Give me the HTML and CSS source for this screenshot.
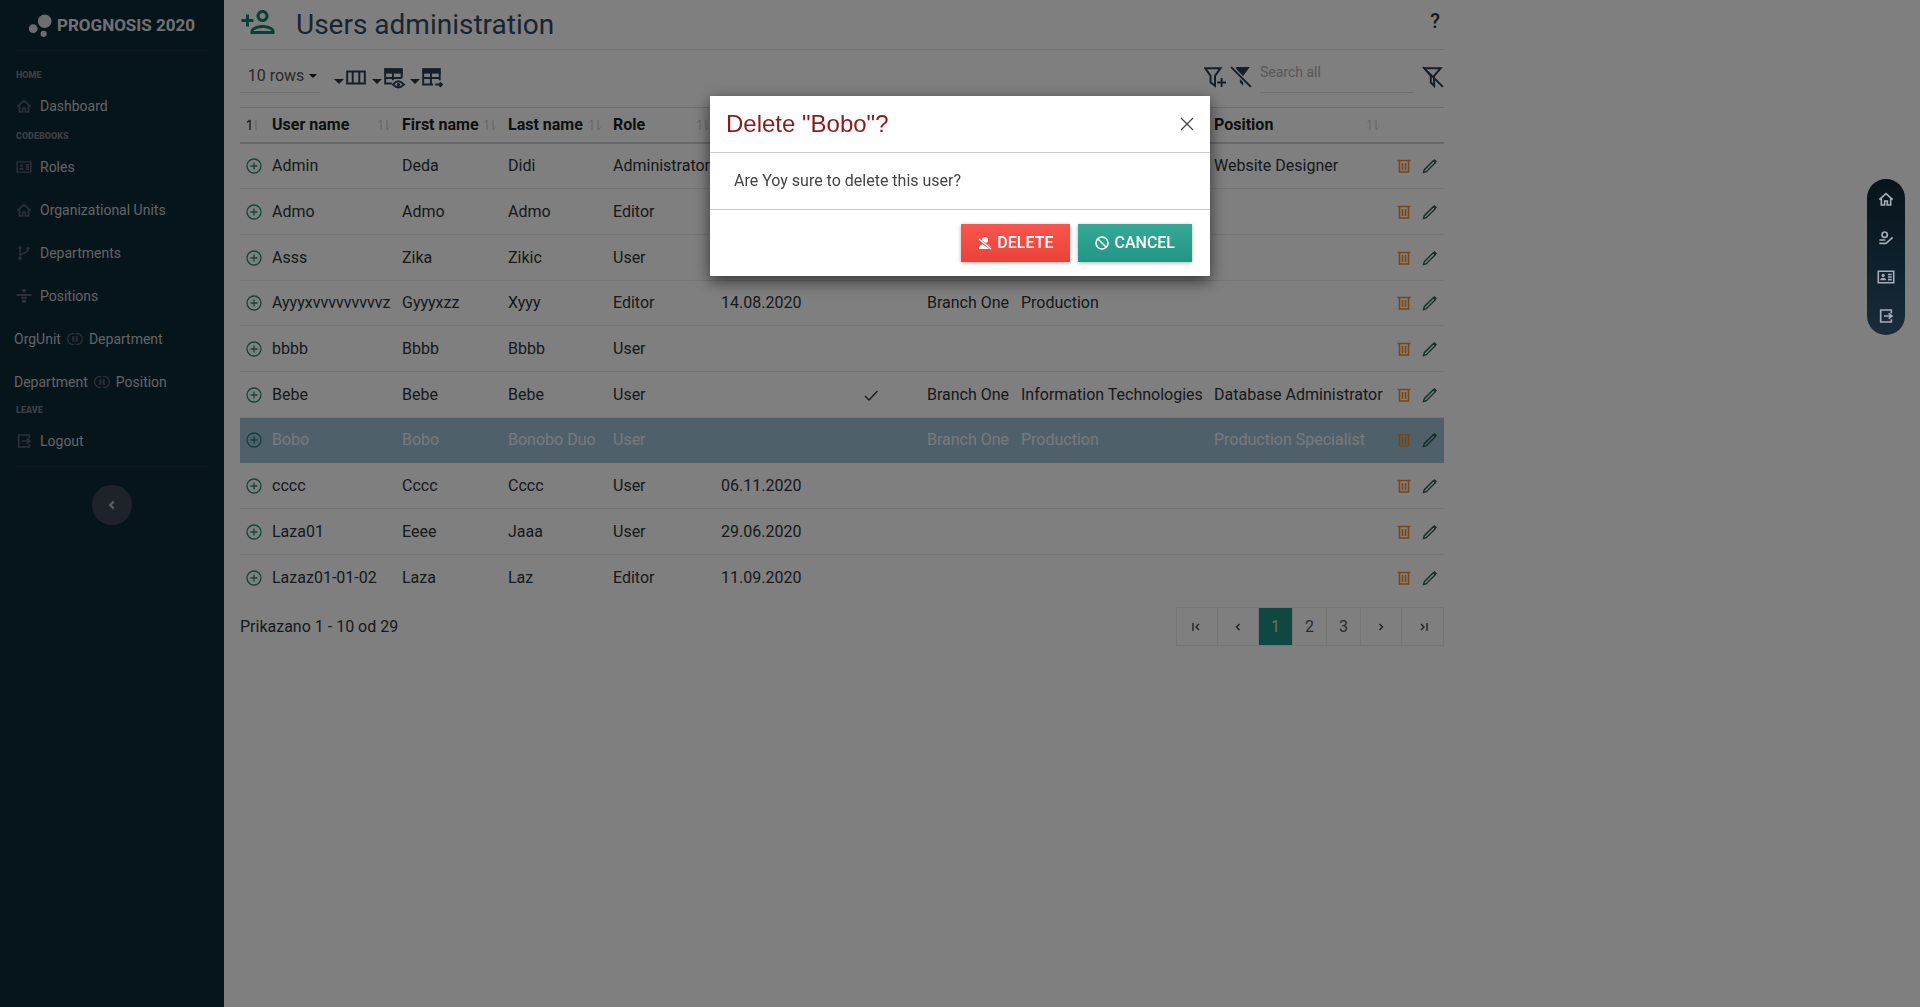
FILE: index.html
```html
<!DOCTYPE html>
<html lang="en">
<head>
<meta charset="utf-8">
<title>Users administration</title>
<link rel="stylesheet" href="styles.css">
</head>
<body>
<svg class="sprite" aria-hidden="true">
  <symbol id="home" viewBox="0 0 24 24"><path d="M2 13 12 4l10 9M5 11v10h5v-6h4v6h5V11" fill="none" stroke="currentColor" stroke-width="2.500"/></symbol>
  <symbol id="card" viewBox="0 0 28 24"><path d="M2 3h24v18H2zM17 8h6M17 12h6M17 16h6" fill="none" stroke="currentColor" stroke-width="2.500"/><circle cx="9.500" cy="9.500" r="2.500" fill="currentColor"/><path d="M5 17c0-5 9-5 9 0z" fill="currentColor"/></symbol>
  <symbol id="branch" viewBox="0 0 24 24"><path d="M6 6v12M18 7c0 6-12 4-12 10" fill="none" stroke="currentColor" stroke-width="2"/><circle cx="6" cy="4" r="2.500" fill="currentColor"/><circle cx="18" cy="5" r="2.500" fill="currentColor"/><circle cx="6" cy="20" r="2.500" fill="currentColor"/></symbol>
  <symbol id="person" viewBox="0 0 24 24"><circle cx="12" cy="4" r="3" fill="currentColor"/><path d="M1 9h22v3H1zM7 13h10l-2 4H9zM9 18h6v4H9z" fill="currentColor"/></symbol>
  <symbol id="link" viewBox="0 0 24 24"><path d="M11 4H8a7 8 0 0 0 0 16h3M13 4h3a7 8 0 0 1 0 16h-3" fill="none" stroke="currentColor" stroke-width="2"/><path d="M8 8h3v8H8zM13 8h3v8h-3z" fill="currentColor"/></symbol>
  <symbol id="exit" viewBox="0 0 24 24"><path d="M20 8V3H4v18h16v-4M9 12h11M16 8l5 4-5 4" fill="none" stroke="currentColor" stroke-width="2.500"/></symbol>
  <symbol id="useredit" viewBox="0 0 24 24"><circle cx="10" cy="7" r="4" fill="none" stroke="currentColor" stroke-width="2.500"/><path d="M2 15h9M2 20h10l10-9" fill="none" stroke="currentColor" stroke-width="2.500"/></symbol>
  <symbol id="plus" viewBox="0 0 16 16"><circle cx="8" cy="8" r="7" fill="none" stroke="currentColor" stroke-width="1.300"/><path d="M8 4.500v7M4.500 8h7" stroke="currentColor" stroke-width="1.300"/></symbol>
  <symbol id="trash" viewBox="0 0 16 16"><path d="M1.500 2.500h13M3.500 3v11h9V3M6.500 5v7M9.500 5v7" fill="none" stroke="currentColor" stroke-width="1.600"/></symbol>
  <symbol id="pencil" viewBox="0 0 16 16"><path d="M1.500 14.500l.8-2.800 9-9 2 2-9 9z" fill="none" stroke="currentColor" stroke-width="1.300"/><path d="M11.500 2l1-1 2.500 2.500-1 1z" fill="currentColor"/></symbol>
  <symbol id="check" viewBox="0 0 16 16"><path d="M2 9l4 4 8.500-9" fill="none" stroke="currentColor" stroke-width="1.300"/></symbol>
  <symbol id="sort" viewBox="0 0 14 14"><path d="M4 12V2M1.500 4.500 4 2M10 2v10M12.500 9.500 10 12" fill="none" stroke="currentColor" stroke-width="1"/></symbol>
  <symbol id="up" viewBox="0 0 14 14"><path d="M5 12V2M2 4.500 5 2" fill="none" stroke="currentColor" stroke-width="1.500"/><path d="M11 2v10" stroke="currentColor" stroke-width="1" opacity=".3"/></symbol>
</svg>

<div class="layout">
  <nav class="sidebar">
    <a class="brand" href="#">
      <svg viewBox="0 0 22 22"><circle cx="15" cy="7" r="6.500"/><circle cx="4" cy="14" r="4.200"/><circle cx="14" cy="19" r="3"/></svg>
      <span>PROGNOSIS 2020</span>
    </a>
    <hr>
    <h2>HOME</h2>
    <ul class="home-links">
      <li><a href="#"><svg><use href="#home"/></svg>Dashboard</a></li>
    </ul>
    <h2>CODEBOOKS</h2>
    <ul>
      <li><a href="#"><svg><use href="#card"/></svg>Roles</a></li>
      <li><a href="#"><svg><use href="#home"/></svg>Organizational Units</a></li>
      <li><a href="#"><svg><use href="#branch"/></svg>Departments</a></li>
      <li><a href="#"><svg><use href="#person"/></svg>Positions</a></li>
      <li><a class="pair" href="#">OrgUnit<svg><use href="#link"/></svg>Department</a></li>
      <li><a class="pair" href="#">Department<svg><use href="#link"/></svg>Position</a></li>
    </ul>
    <h2>LEAVE</h2>
    <ul>
      <li><a href="#"><svg><use href="#exit"/></svg>Logout</a></li>
    </ul>
    <hr>
    <button class="collapse" aria-label="Collapse menu"><svg viewBox="0 0 12 12"><path d="M7.500 3 4.500 6l3 3"/></svg></button>
  </nav>

  <main class="content">
    <header class="page-head">
      <svg class="adduser" viewBox="0 0 24 24"><path d="M15 12c2.210 0 4-1.790 4-4s-1.790-4-4-4-4 1.790-4 4 1.790 4 4 4zm0-6c1.100 0 2 .9 2 2s-.9 2-2 2-2-.9-2-2 .9-2 2-2zm0 8c-2.670 0-8 1.340-8 4v2h16v-2c0-2.660-5.330-4-8-4zm-6 4c.22-.72 3.310-2 6-2 2.700 0 5.800 1.290 6 2H9zm-3-3v-3h3v-2H6V7H4v3H1v2h3v3z"/></svg>
      <h1>Users administration</h1>
      <button class="help">?</button>
    </header>

    <div class="toolbar">
      <button class="rows">10 rows <span class="caret"></span></button>
      <div class="tools">
        <button aria-label="Columns"><span class="caret"></span><svg viewBox="0 0 20 20"><path class="line" d="M2 4h16v11H2zM7 4v11M13 4v11"/></svg></button>
        <button aria-label="Visibility"><span class="caret"></span><svg viewBox="0 0 20 20"><path d="M1 1h17v5H1z"/><path class="line" d="M2 5v10h6M2 10h15M9 5v7M17 5v5"/><path class="line" d="M9 16q5-6 10 0-5 5-10 0z"/><circle cx="14" cy="16" r="1.500"/></svg></button>
        <button aria-label="Export"><span class="caret"></span><svg viewBox="0 0 20 20"><path d="M1 1h17v5H1z"/><path class="line" d="M2 5v11h9M2 10h15M9 5v11M17 5v7M13 16h6M17 14l2 2-2 2"/></svg></button>
      </div>
      <div class="filters">
        <button aria-label="Add filter"><svg viewBox="0 0 20 20"><path class="line" d="M1 2h14l-5 7v9l-4-3V9zM12 15h8M16 11v8"/></svg></button>
        <button aria-label="Remove filter"><svg viewBox="0 0 20 20"><path d="M5 1h13l-6 8v9l-3-3V9z"/><path d="M1 1l18 18" stroke="#fff" stroke-width="4"/><path class="line" d="M1 1l18 18"/></svg></button>
        <input type="search" placeholder="Search all" aria-label="Search all">
        <button aria-label="Clear search"><svg viewBox="0 0 20 20"><path class="line" d="M2 2h15l-6 7v9l-3-3V9zM1 1l18 18"/></svg></button>
      </div>
    </div>

    <table>
      <colgroup><col class="c-open"><col class="c-user"><col class="c-first"><col class="c-last"><col class="c-role"><col class="c-date"><col class="c-flag"><col class="c-unit"><col class="c-dept"><col class="c-pos"><col class="c-act"></colgroup>
      <thead>
        <tr>
          <th class="arrow"><svg><use href="#up"/></svg></th>
          <th>User name<svg><use href="#sort"/></svg></th><th>First name<svg><use href="#sort"/></svg></th><th>Last name<svg><use href="#sort"/></svg></th><th>Role<svg><use href="#sort"/></svg></th>
          <th></th><th></th><th></th><th></th><th>Position<svg class="wide"><use href="#sort"/></svg></th><th></th>
        </tr>
      </thead>
      <tbody id="users"></tbody>
    </table>

    <footer class="table-foot">
      <p>Prikazano 1 - 10 od 29</p>
      <div class="pager">
        <button class="step" aria-label="First"><svg viewBox="0 0 12 12"><path d="M2 2v8M8 3 5 6l3 3"/></svg></button>
        <button class="step" aria-label="Previous"><svg viewBox="0 0 12 12"><path d="M7.500 3 4.500 6l3 3"/></svg></button>
        <button class="current">1</button><button>2</button><button>3</button>
        <button class="step" aria-label="Next"><svg viewBox="0 0 12 12"><path d="M4.500 3l3 3-3 3"/></svg></button>
        <button class="step" aria-label="Last"><svg viewBox="0 0 12 12"><path d="M4 3l3 3-3 3M10 2v8"/></svg></button>
      </div>
    </footer>
  </main>
</div>

<div class="backdrop"></div>

<aside class="dock">
  <a href="#" aria-label="Home"><svg><use href="#home"/></svg></a>
  <a href="#" aria-label="Profile"><svg><use href="#useredit"/></svg></a>
  <a href="#" aria-label="Roles"><svg><use href="#card"/></svg></a>
  <a href="#" aria-label="Logout"><svg><use href="#exit"/></svg></a>
</aside>

<div class="modal" role="dialog" aria-labelledby="modal-title">
  <div class="modal-head">
    <h2 id="modal-title">Delete "Bobo"?</h2>
    <button class="close" aria-label="Close"><svg viewBox="0 0 14 14"><path d="M1 1l12 12M13 1 1 13"/></svg></button>
  </div>
  <p class="modal-body">Are Yoy sure to delete this user?</p>
  <div class="modal-foot">
    <button class="btn danger"><svg viewBox="0 0 14 14"><circle cx="7" cy="4" r="3" fill="currentColor"/><path d="M1 13c0-7 12-7 12 0z" fill="currentColor"/><path d="M0 3.500l14 9.500" stroke="#ef5350" stroke-width="3"/><path d="M1 3l12 10" stroke="currentColor" stroke-width="1.500"/></svg>DELETE</button>
    <button class="btn calm"><svg viewBox="0 0 14 14"><circle cx="7" cy="7" r="6" fill="none" stroke="currentColor" stroke-width="1.600"/><path d="M3 3l8 8" stroke="currentColor" stroke-width="1.600"/></svg>CANCEL</button>
  </div>
</div>
<script src="users.js"></script>
</body>
</html>
```
FILE: users.js
```js
const users = [
  ["Admin", "Deda", "Didi", "Administrator", "", "", "", "", "Website Designer"],
  ["Admo", "Admo", "Admo", "Editor", "", "", "", "", ""],
  ["Asss", "Zika", "Zikic", "User", "", "", "", "", ""],
  ["Ayyyxvvvvvvvvvz", "Gyyyxzz", "Xyyy", "Editor", "14.08.2020", "", "Branch One", "Production", ""],
  ["bbbb", "Bbbb", "Bbbb", "User", "", "", "", "", ""],
  ["Bebe", "Bebe", "Bebe", "User", "", "check", "Branch One", "Information Technologies", "Database Administrator"],
  ["Bobo", "Bobo", "Bonobo Duo", "User", "", "", "Branch One", "Production", "Production Specialist"],
  ["cccc", "Cccc", "Cccc", "User", "06.11.2020", "", "", "", ""],
  ["Laza01", "Eeee", "Jaaa", "User", "29.06.2020", "", "", "", ""],
  ["Lazaz01-01-02", "Laza", "Laz", "Editor", "11.09.2020", "", "", "", ""]
];
const icon = (name) => `<svg><use href="#${name}"/></svg>`;
document.getElementById("users").innerHTML = users.map((u) => {
  const cells = u.map((v) => `<td>${v === "check" ? icon("check") : v}</td>`).join("");
  return `<tr${u[0] === "Bobo" ? ' class="selected"' : ""}>
    <td class="open"><button aria-label="Details of ${u[0]}">${icon("plus")}</button></td>${cells}
    <td><div class="actions"><button class="remove" aria-label="Delete ${u[0]}">${icon("trash")}</button><button class="edit" aria-label="Edit ${u[0]}">${icon("pencil")}</button></div></td></tr>`;
}).join("");
```
FILE: styles.css
```css
* { box-sizing: border-box; }
body {
  margin: 0;
  background: #fff;
  color: #2f3337;
  font: 16px/24px Roboto, "Liberation Sans", sans-serif;
}
h1, h2, p, ul { margin: 0; padding: 0; }
ul { list-style: none; }
a { color: inherit; text-decoration: none; }
button {
  margin: 0;
  padding: 0;
  border: 0;
  background: none;
  color: inherit;
  font: inherit;
  display: inline-flex;
  align-items: center;
  justify-content: center;
}
svg { display: block; width: 16px; height: 16px; flex: none; }
.sprite { position: absolute; width: 0; height: 0; }
.caret {
  border: 4px solid transparent;
  border-top: 4px solid currentColor;
  border-bottom: 0;
}
.layout { display: flex; min-height: 100vh; }

/* Sidebar */
.sidebar {
  width: 224px;
  flex: none;
  padding: 0 16px;
  background: #0c2a34;
  color: #c4c7cc;
  font-size: 14px;
}
.brand {
  display: flex;
  align-items: center;
  gap: 5px;
  height: 50px;
  padding-left: 13px;
  color: #e0e3e8;
  font-size: 17px;
  font-weight: 700;
}
.brand svg { width: 23px; height: 23px; fill: #d8dbe2; }
.sidebar hr { margin: 0; border: 0; border-top: 1px solid #1c343e; }
.sidebar h2 {
  height: 14px;
  margin-bottom: 2px;
  color: #747e88;
  font-size: 9px;
  line-height: 14px;
  font-weight: 900;
}
.brand + hr { margin-bottom: 17px; }
.home-links { padding-bottom: 2px; }
.sidebar li a { display: flex; align-items: center; gap: 8px; height: 43px; }
.sidebar li svg { color: #59616a; }
.sidebar li a.pair { margin-left: -2px; gap: 6px; }
.sidebar ul + hr { margin: 4px 0 18px; }
.collapse {
  display: flex;
  width: 40px;
  height: 40px;
  margin: 0 auto;
  border-radius: 50%;
  background: #3d4752;
}
.collapse svg { width: 14px; height: 14px; fill: none; stroke: #b8bcc4; stroke-width: 2; }

/* Content */
.content { flex: 1; min-width: 0; max-width: 1236px; padding: 0 16px; }
.page-head {
  display: flex;
  align-items: center;
  height: 50px;
  border-bottom: 1px solid #e0e2e4;
}
.adduser { width: 36px; height: 42px; padding-bottom: 6px; fill: #0f8068; margin-right: 20px; }
h1 { color: #34495e; font-size: 28px; line-height: 36px; font-weight: 400; }
.help { margin-left: auto; padding: 0 4px 8px; font-size: 20px; font-weight: 500; }
.toolbar { display: flex; align-items: center; height: 57px; padding-bottom: 4px; }
.rows {
  height: 32px;
  width: 80px;
  padding-left: 5px;
  gap: 5px;
  border-bottom: 1px solid #ddd;
  color: #555;
}
.rows .caret { color: #111; }
.tools { display: flex; gap: 5px; padding: 2px 0 0 14px; }
.tools button { gap: 1px; }
.tools .caret { margin-top: 8px; border-width: 5px 5px 0; }
.toolbar svg { width: 22px; height: 22px; fill: #2c3e50; }
.toolbar .line { fill: none; stroke: #2c3e50; stroke-width: 1.8; }
.filters { display: flex; align-items: center; gap: 4px; margin-left: auto; }
.filters input {
  width: 154px;
  height: 32px;
  margin: 0 4px;
  padding: 0 0 8px;
  border: 0;
  border-bottom: 1px solid #dcdcdc;
  background: none;
  font: 14px/20px Roboto, sans-serif;
}
.filters input::placeholder { color: #b0b0b0; opacity: 1; }

/* Table */
table { width: 100%; table-layout: fixed; border-collapse: separate; border-spacing: 0; }
.c-open { width: 28px; }
.c-user { width: 130px; }
.c-first { width: 106px; }
.c-last { width: 105px; }
.c-role { width: 108px; }
.c-date { width: 142px; }
.c-flag { width: 64px; }
.c-unit { width: 94px; }
.c-dept { width: 193px; }
.c-pos { width: 182px; }
th, td { padding: 0 4px; text-align: left; white-space: nowrap; }
th {
  height: 37px;
  border-top: 1px solid #d8dadd;
  border-bottom: 2px solid #ccd0d3;
  color: #1b1e21;
  font-weight: 700;
}
th svg { float: right; width: 14px; height: 14px; margin: 5px 3px 0 0; color: #c6c6c6; }
th svg.wide { margin-right: 8px; }
th.arrow svg { float: none; margin: 0 0 0 1px; color: #444; }
td { height: 46px; border-bottom: 1px solid #e8eaec; }
tbody tr:nth-child(3n + 1) td { height: 45px; }
tbody tr:last-child td { border-bottom: 0; }
.open { padding-left: 6px; color: #2a8a74; }
.open button, .actions button { display: flex; }
.actions { display: flex; gap: 10px; }
.remove { color: #f08c1c; }
.edit { color: #23584f; }
.selected td { background: #a0c0d6; border-color: #a0c0d6; color: #eef4f8; }
.selected td.open { color: #2a7a84; }

/* Paging */
.table-foot { display: flex; justify-content: space-between; align-items: center; padding-top: 7px; }
.pager { display: flex; height: 39px; border: 1px solid #eaeaea; color: #555; }
.pager button { width: 34px; border-right: 1px solid #eaeaea; }
.pager .step { width: 41px; }
.pager button:last-child { border-right: 0; }
.pager .current { background: #1c9080; color: #d0dede; }
.pager svg { width: 12px; height: 12px; fill: none; stroke: #444; stroke-width: 1.400; }

/* Overlays */
.backdrop { position: fixed; inset: 0; background: rgba(0, 0, 0, 0.5); }
.dock {
  position: fixed;
  right: 15px;
  top: 179px;
  display: flex;
  flex-direction: column;
  width: 38px;
  border-radius: 19px;
  background: linear-gradient(#08141a, #0d1f2a 50%, #1c2c3a);
  color: #a4adb8;
}
.dock a { display: flex; align-items: center; justify-content: center; height: 39px; }
.dock a svg { width: 18px; }
.modal {
  position: fixed;
  top: 96px;
  left: 50%;
  width: 500px;
  margin-left: -250px;
  background: #fff;
  box-shadow: 0 5px 15px rgba(0, 0, 0, 0.6);
}
.modal-head {
  display: flex;
  align-items: center;
  justify-content: space-between;
  height: 57px;
  padding: 0 16px;
  border-bottom: 1px solid #ccc;
}
.modal-head h2 { color: #8b1a1a; font: 400 24px/32px "Liberation Sans", Arial, sans-serif; }
.close svg { width: 14px; height: 14px; fill: none; stroke: #444; stroke-width: 1.200; }
.modal-body { padding: 16px 24px; border-bottom: 1px solid #ccc; color: #444; }
.modal-foot { display: flex; justify-content: flex-end; gap: 8px; padding: 14px 18px; }
.btn {
  height: 38px;
  padding: 0 17px;
  gap: 5px;
  color: #fff;
  font-weight: 500;
  box-shadow: 0 1px 4px rgba(0, 0, 0, 0.3);
}
.btn svg { width: 14px; height: 14px; }
.danger { background: linear-gradient(#f9564f, #ea4238); }
.calm { background: linear-gradient(#36a898, #219684); }
```
